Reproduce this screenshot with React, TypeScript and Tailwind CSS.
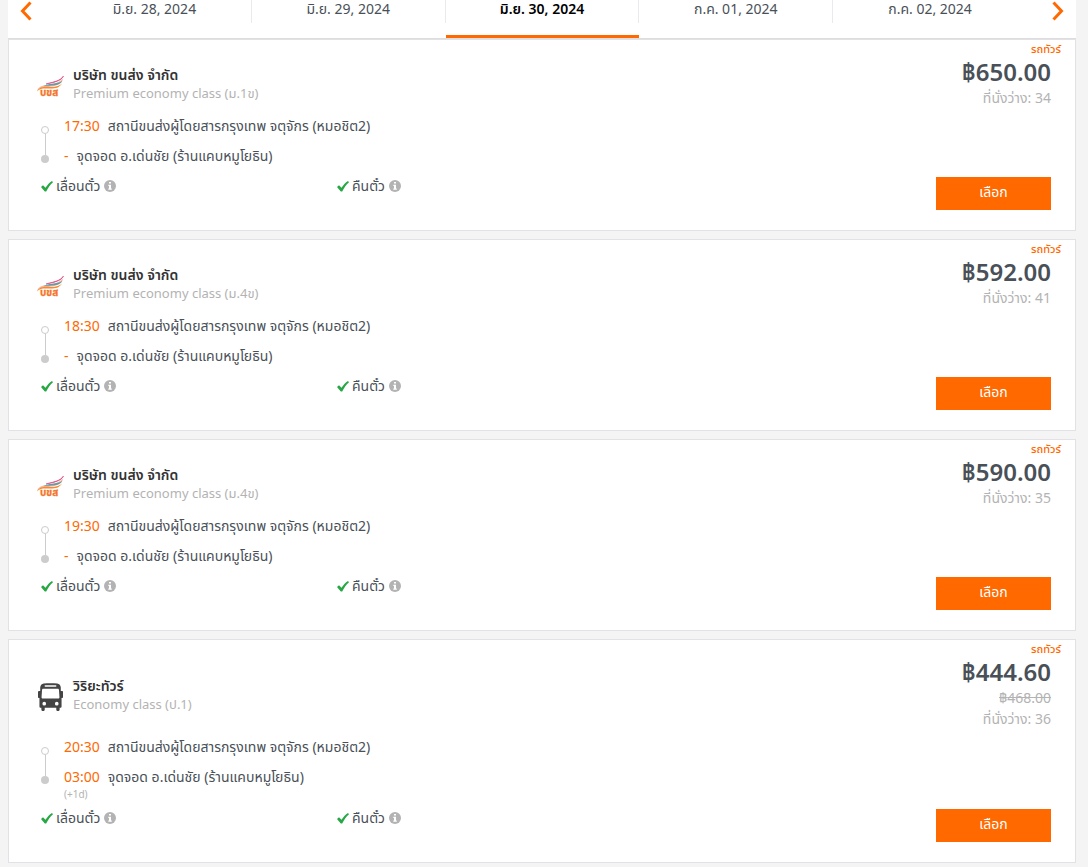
import React from 'react';

type Trip = {
  carrier: string;
  travelClass: string;
  logo: 'transport' | 'bus';
  depart: string;
  arrive: string;
  nextDay?: string;
  price: string;
  oldPrice?: string;
  seats: number;
};

const dates = [
  { label: 'มิ.ย. 28, 2024' },
  { label: 'มิ.ย. 29, 2024' },
  { label: 'มิ.ย. 30, 2024', active: true },
  { label: 'ก.ค. 01, 2024' },
  { label: 'ก.ค. 02, 2024' },
];

const trips: Trip[] = [
  { carrier: 'บริษัท ขนส่ง จำกัด', travelClass: 'Premium economy class (ม.1ข)', logo: 'transport', depart: '17:30', arrive: '-', price: '650.00', seats: 34 },
  { carrier: 'บริษัท ขนส่ง จำกัด', travelClass: 'Premium economy class (ม.4ข)', logo: 'transport', depart: '18:30', arrive: '-', price: '592.00', seats: 41 },
  { carrier: 'บริษัท ขนส่ง จำกัด', travelClass: 'Premium economy class (ม.4ข)', logo: 'transport', depart: '19:30', arrive: '-', price: '590.00', seats: 35 },
  { carrier: 'วิริยะทัวร์', travelClass: 'Economy class (ป.1)', logo: 'bus', depart: '20:30', arrive: '03:00', nextDay: '(+1d)', price: '444.60', oldPrice: '468.00', seats: 36 },
];

function Chevron({ left = false }: { left?: boolean }) {
  return (
    <svg width="12" height="20" viewBox="0 0 12 20" fill="none" stroke="#ff6900" strokeWidth="3" aria-hidden="true">
      <path d={left ? 'M10.5 1.5 2.5 10l8 8.5' : 'M1.5 1.5 9.5 10l-8 8.5'} />
    </svg>
  );
}

function TransportLogo() {
  return (
    <svg width="27" height="27" viewBox="0 -1.5 27 27" aria-hidden="true">
      <path d="M0 16C3 10 8 11.500 14 10 20 8.500 24 6.500 26 4 25 9 21 11 15 12 9 12.800 4 12 0 16Z" fill="#f6b79c" />
      <path d="M9 9.500C15 7.500 23 7 26.500 1.500 24.500 6.500 17 8 9 9.500Z" fill="#e0437c" stroke="#e0437c" strokeWidth="0.6" />
      <path d="M6 11.500C13 8 22 10 25.500 6 23 12 14 11 6 11.500Z" fill="#5f9cae" />
      <path d="M0 17C3 11 9 12.500 14 12.500 19 12.500 23 11 25 9 22 14 17 14.200 12 14 7 13.800 3 13.500 0 17Z" fill="#f58a32" />
      <text x="3" y="21.500" fontSize="10" fontWeight="700" fill="#f4752a" stroke="#f4752a" strokeWidth="0.3">บขส</text>
    </svg>
  );
}

function BusLogo() {
  return (
    <svg className="ml-px" width="25" height="28" viewBox="0 0 26 28" preserveAspectRatio="none" aria-hidden="true">
      <path
        fillRule="evenodd"
        fill="#444"
        d="M6 .6C10 .1 16 .1 20 .6c2.300.3 3.500 1.800 3.700 4V8H25c.6 0 1 .4 1 1v5c0 .6-.4 1-1 1h-.5v8.500c0 .8-.5 1.300-1.300 1.300h-.7v1.700c0 2-3.500 2-3.500 0v-1.700H7v1.700c0 2-3.500 2-3.500 0v-1.700h-.7c-.8 0-1.300-.5-1.300-1.300V15H1c-.6 0-1-.4-1-1V9c0-.6.4-1 1-1h1.300V4.600C2.500 2.400 3.700.9 6 .6ZM7.500 2.200c-.9 0-.9 1.600 0 1.600h11c.9 0 .9-1.600 0-1.600ZM5.500 5.800c-.8 0-1.200.4-1.300 1.200l-.5 7c-.1.900.4 1.500 1.300 1.500h16c.9 0 1.400-.6 1.300-1.500l-.5-7c-.1-.8-.5-1.200-1.300-1.200ZM6.500 18.800a1.900 1.900 0 1 0 0 3.800 1.900 1.900 0 0 0 0-3.800ZM19.500 18.800a1.900 1.900 0 1 0 0 3.800 1.900 1.900 0 0 0 0-3.800Z"
      />
    </svg>
  );
}

function Condition({ label }: { label: string }) {
  return (
    <div className="flex w-74 items-center pl-1">
      <svg width="12" height="11" viewBox="0 0 12 11" fill="none" aria-hidden="true">
        <path d="M0 6 2 4.200 4.500 6.700C6.500 3.800 8.500 1.500 11 0L12 1.200C9 3.700 7 6.800 5.200 10.500H3.800Z" fill="#28a745" />
      </svg>
      <span className="pl-[3px]">{label}</span>
      <svg className="ml-1" width="12" height="12" viewBox="0 0 12 12" aria-hidden="true">
        <circle cx="6" cy="6" r="6" fill="#b3b3b3" />
        <path d="M5 2h2v1.600H5ZM4.300 4.800H7v3.700h.8V9.700H4.300V8.500H5V6h-.7Z" fill="#fff" />
      </svg>
    </div>
  );
}

function TripCard({ trip }: { trip: Trip }) {
  return (
    <article className="border border-[#e2e2e6] bg-white">
      <div className="flex items-center justify-between">
        <div className="flex items-center pt-[17px] pl-7">
          <div className="flex w-9 pt-1">{trip.logo === 'bus' ? <BusLogo /> : <TransportLogo />}</div>
          <div className="leading-[18px]">
            <h2 className="text-[14px] font-semibold text-[#333]">{trip.carrier}</h2>
            <p className="text-[13px] text-[#b3b3b3]">{trip.travelClass}</p>
          </div>
        </div>
        <div className="pr-6 pb-[3px] text-right text-[14px] leading-[21px] text-[#b3b3b3]">
          <p className="-mr-2.5 text-[11px] leading-[17px] font-medium text-[#ff6900]">รถทัวร์</p>
          <p className="text-[24px] leading-[30px] font-semibold text-[#495057]">฿{trip.price}</p>
          {trip.oldPrice && (
            <p>
              <s>฿{trip.oldPrice}</s>
            </p>
          )}
          <p>ที่นั่งว่าง: {trip.seats}</p>
        </div>
      </div>
      <div className="flex items-end justify-between">
        <div className="pb-[29px] pl-7 text-[14px] leading-[30px]">
          <div className="flex">
            <div className="flex w-[27px] flex-col items-center pt-[15px] pr-[11px]">
              <i className="size-2 rounded-full border border-[#ccc]" />
              <i className="h-[21px] w-px bg-[#ccc]" />
              <i className="size-2 rounded-full bg-[#ccc]" />
            </div>
            <div>
              <p className="flex gap-2">
                <time className="text-[#ff6900]">{trip.depart}</time>
                <span>สถานีขนส่งผู้โดยสารกรุงเทพ จตุจักร (หมอชิต2)</span>
              </p>
              <p className="flex gap-2">
                <time className="text-[#ff6900]">{trip.arrive}</time>
                <span>จุดจอด อ.เด่นชัย (ร้านแคบหมูโยธิน)</span>
              </p>
              {trip.nextDay && <p className="h-[11px] text-[10px] leading-1 text-[#b3b3b3]">{trip.nextDay}</p>}
            </div>
          </div>
          <div className="flex">
            <Condition label="เลื่อนตั๋ว" />
            <Condition label="คืนตั๋ว" />
          </div>
        </div>
        <div className="pr-6 pb-5">
          <button type="button" className="block h-[33px] w-[115px] cursor-pointer bg-[#ff6900] pb-1 text-[14px] text-white">
            เลือก
          </button>
        </div>
      </div>
    </article>
  );
}

export default function App() {
  return (
    <main className="min-h-screen bg-[#f4f4f4] pr-3 pb-1 pl-2 font-['Noto_Sans','Noto_Sans_Thai',sans-serif] text-[14px] text-[#495057]">
      <nav aria-label="วันเดินทาง" className="flex h-[39px] border-b border-[#ddd] bg-white">
        <button type="button" aria-label="ก่อนหน้า" className="flex w-[50px] shrink-0 cursor-pointer pt-px pl-3">
          <Chevron left />
        </button>
        <div className="flex flex-1">
          {dates.map((d) => (
            <button
              key={d.label}
              type="button"
              className={
                d.active
                  ? 'group flex flex-1 cursor-pointer items-start border-b-[3px] border-[#ff6900] font-semibold text-black'
                  : 'group flex flex-1 cursor-pointer items-start'
              }
            >
              <span className="h-[23px] flex-1 border-r border-[#e9e9ee] leading-[18px] group-last:border-r-0">{d.label}</span>
            </button>
          ))}
        </div>
        <button type="button" aria-label="ถัดไป" className="flex w-[49px] shrink-0 cursor-pointer justify-end pt-px pr-3">
          <Chevron />
        </button>
      </nav>
      <div className="flex flex-col gap-2">
        {trips.map((trip) => (
          <TripCard key={trip.depart} trip={trip} />
        ))}
      </div>
    </main>
  );
}
